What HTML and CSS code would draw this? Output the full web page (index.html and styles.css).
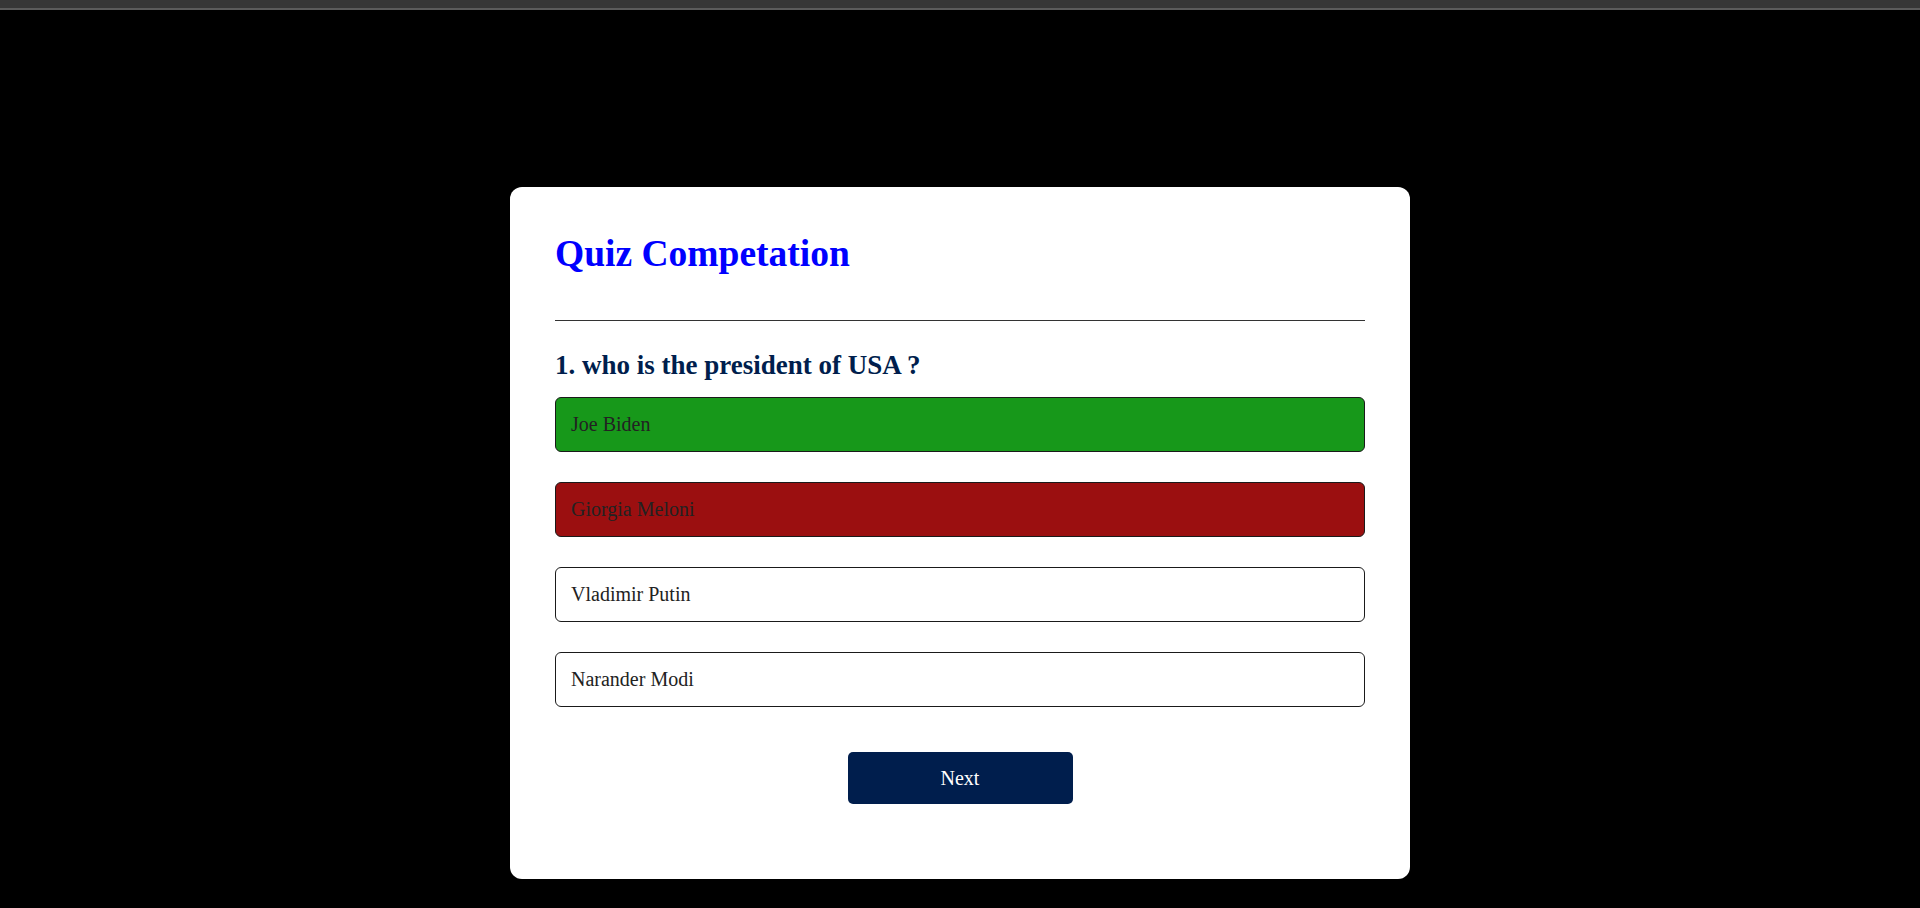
FILE: index.html
```html
<!DOCTYPE html>
<html lang="en">
<head>
<meta charset="UTF-8">
<title>Quiz Competation</title>
<link rel="stylesheet" href="styles.css">
</head>
<body>
<div class="topbar"></div>
<div class="app">
  <h1 class="title">Quiz Competation</h1>
  <hr class="divider">
  <div class="quiz">
    <h2 class="question">1. who is the president of USA ?</h2>
    <div class="answers">
      <button class="btn correct">Joe Biden</button>
      <button class="btn incorrect">Giorgia Meloni</button>
      <button class="btn">Vladimir Putin</button>
      <button class="btn">Narander Modi</button>
    </div>
    <div class="actions">
      <button class="next-btn">Next</button>
    </div>
  </div>
</div>
</body>
</html>
```

FILE: styles.css
```css
* {
  box-sizing: border-box;
}

body {
  margin: 0;
  background: #000;
  font-family: "Liberation Serif", "Times New Roman", serif;
  min-height: 908px;
}

.topbar {
  height: 10px;
  background: #373737;
  border-bottom: 2px solid #5c5c5c;
}

.app {
  width: 900px;
  margin: 177px auto 0;
  background: #fff;
  border-radius: 12px;
  padding: 43px 45px 75px;
}

.title {
  margin: 0;
  font-size: 37.5px;
  line-height: 48px;
  font-weight: bold;
  color: #0000ff;
}

.divider {
  margin: 42px 0 0;
  border: 0;
  border-top: 1px solid #333;
  height: 0;
}

.question {
  margin: 29px 0 16px;
  font-size: 27px;
  line-height: 31px;
  font-weight: bold;
  color: #001e4d;
}

.answers {
  display: flex;
  flex-direction: column;
  gap: 30px;
}

.btn {
  display: flex;
  align-items: center;
  height: 55px;
  width: 100%;
  padding: 0 15px;
  background: #fff;
  border: 1px solid #1a1a1a;
  border-radius: 6px;
  font-family: "Liberation Serif", "Times New Roman", serif;
  font-size: 20px;
  color: #222;
  text-align: left;
}

.btn.correct {
  background: #17981a;
}

.btn.incorrect {
  background: #9b0f10;
}

.actions {
  display: flex;
  justify-content: center;
  margin-top: 45px;
}

.next-btn {
  width: 225px;
  height: 52px;
  background: #001e4d;
  color: #fff;
  border: 0;
  border-radius: 5px;
  font-family: "Liberation Serif", "Times New Roman", serif;
  font-size: 20px;
}
```
